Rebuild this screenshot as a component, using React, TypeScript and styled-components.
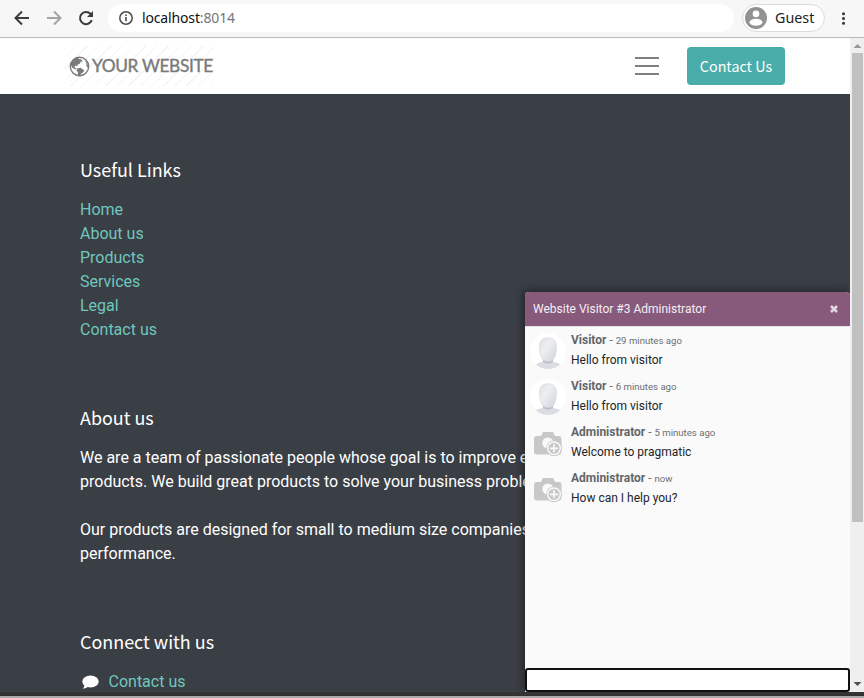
import React from "react";
import styled, { createGlobalStyle } from "styled-components";

const Global = createGlobalStyle`
  * { box-sizing: border-box; }
  html, body { margin: 0; padding: 0; overflow: hidden; }
  ul { list-style: none; margin: 0; padding: 0; }
  h5, p { margin: 0; font-weight: 400; }
  a { color: inherit; text-decoration: none; }
  svg { display: block; flex: none; }
`;

const Window = styled.div`
  position: relative;
  width: 864px;
  height: 698px;
  display: flex;
  flex-direction: column;
  overflow: hidden;
  font-family: Roboto, sans-serif;
`;

const Toolbar = styled.div`
  height: 38px;
  flex: none;
  display: flex;
  align-items: flex-start;
  background: #f7f7f7;
  border-bottom: 1px solid #b9b9b9;
  padding: 4px 0 0 12px;
  font-family: "Noto Sans", sans-serif;
`;

const NavButtons = styled.div`
  display: flex;
  gap: 12px;
  padding-top: 4px;
  width: 96px;
`;

const AddressBar = styled.div`
  width: 626px;
  height: 28px;
  border-radius: 14px;
  background: #fff;
  display: flex;
  align-items: center;
  padding-left: 10px;
  font-size: 14px;
  color: #111;
`;

const Url = styled.span`
  margin-left: 8px;
  padding-bottom: 2px;
  letter-spacing: -0.15px;
  white-space: nowrap;
`;

const Port = styled.span`
  color: #73777b;
`;

const GuestChip = styled.div`
  margin-left: 8px;
  width: 83px;
  height: 28px;
  border: 1px solid #dcdcdc;
  border-radius: 14px;
  background: #fff;
  display: flex;
  align-items: center;
  padding-left: 2px;
  gap: 8px;
  font-size: 14.3px;
  color: #222;
`;

const GuestName = styled.span`
  padding-bottom: 2px;
`;

const MenuDots = styled.svg`
  margin: 8px 0 0 16px;
`;

const Viewport = styled.div`
  height: 654px;
  flex: none;
  display: flex;
`;

const Site = styled.div`
  width: 850px;
  display: flex;
  flex-direction: column;
  background: #3a3e45;
`;

const Header = styled.header`
  height: 56px;
  flex: none;
  display: flex;
  align-items: center;
  background: #fff;
  padding-left: 65px;
`;

const Logo = styled.div`
  width: 150px;
  height: 40px;
  display: flex;
  align-items: center;
  padding-left: 4px;
  gap: 2px;
  color: #7a7a7a;
  background: repeating-linear-gradient(135deg, transparent 0 7.2px, #f4f4f4 7.2px 8.2px);
`;

const LogoText = styled.span`
  font: 400 17.3px/20px Lato, sans-serif;
  -webkit-text-stroke: 0.4px #7a7a7a;
  letter-spacing: -0.35px;
  white-space: nowrap;
`;

const Burger = styled.div`
  margin-left: 420px;
  width: 24px;
  height: 18px;
  display: flex;
  flex-direction: column;
  justify-content: space-between;
`;

const BurgerLine = styled.span`
  height: 2px;
  background: #808080;
`;

const ContactButton = styled.a`
  margin-left: 28px;
  width: 98px;
  height: 38px;
  border-radius: 4px;
  background: #4badaa;
  color: #fff;
  font: 14.3px/38px "Noto Sans CJK SC", sans-serif;
  text-align: center;
  white-space: nowrap;
`;

const Footer = styled.footer`
  flex: 1;
  min-height: 0;
  overflow: hidden;
  display: flex;
  flex-direction: column;
  gap: 63px;
  padding: 63px 0 0 80px;
  font-size: 16px;
  line-height: 24px;
  color: #fff;
`;

const Section = styled.section`
  flex: none;
`;

const Heading = styled.h5`
  font: 17.93px/24px "Noto Sans CJK SC", sans-serif;
  margin-bottom: 17px;
`;

const Paragraph = styled.p`
  width: 490px;
  white-space: pre;
  & + & { margin-top: 24px; }
`;

const SiteLink = styled.li`
  height: 24px;
  display: flex;
  align-items: center;
  gap: 9.5px;
  color: #6fc7be;
`;

const Scrollbar = styled.div`
  width: 14px;
  background: #efefef;
  display: flex;
  flex-direction: column;
  align-items: center;
  justify-content: space-between;
`;

const Thumb = styled.div`
  width: 11px;
  height: 469px;
  margin: 0 0 auto 1px;
  background: #c0c0c0;
`;

const Chat = styled.aside`
  position: absolute;
  left: 525px;
  top: 292px;
  width: 325px;
  height: 400px;
  display: flex;
  flex-direction: column;
  background: #fafafa;
  border-radius: 4px 4px 0 0;
  box-shadow: -1px -1px 8px rgba(0, 0, 0, 0.5);
  clip-path: inset(-12px 0 0 -12px);
  font-size: 12px;
  overflow: hidden;
`;

const ChatHeader = styled.div`
  height: 34px;
  flex: none;
  display: flex;
  align-items: center;
  justify-content: space-between;
  padding: 0 12px 0 8px;
  background: #875a7b;
  color: #f4eff3;
`;

const Messages = styled.div`
  flex: 1;
  border-top: 1px solid #e8e4ec;
  padding: 5px 0 0 5px;
`;

const Message = styled.div`
  height: 46px;
  display: flex;
  gap: 5px;
`;

const AvatarFrame = styled.div`
  width: 36px;
  height: 36px;
  margin-top: 1px;
`;

const MessageText = styled.div`
  color: #212529;
  line-height: 18px;
  white-space: nowrap;
`;

const Meta = styled.div`
  height: 19px;
  line-height: 17px;
  color: #6c6f73;
`;

const Author = styled.strong`
  color: #62666a;
`;

const Time = styled.span`
  font-size: 9.6px;
`;

const Composer = styled.input`
  width: 325px;
  height: 24px;
  border: 2px solid #101010;
  border-radius: 3px;
  background: #fff;
  outline: none;
`;

const BottomEdge = styled.div`
  height: 6px;
  background: linear-gradient(#343434 0 3px, #303030 3px 4px, #aaa 4px 6px);
`;

function Globe() {
  return (
    <svg width="21" height="21" viewBox="0 0 21 21">
      <circle cx="10.5" cy="10.5" r="9.2" fill="#fff" stroke="#7a7a7a" strokeWidth="1.4" />
      <path fill="#7a7a7a" d="M2 7 5 3 9 1.300 10 3l2.500.5 1 2-2 .3-.5 1.700-2.500 1.200-.2 1.800-2-1-1 1.500 2 1.500-.5 1L3.500 12 2 9.500ZM8 12.500l3.500-.8 3.800 2.800-1.300 2-1.700 1-1.500 2.300-1.600-.3-.4-3.500L7.500 14.500ZM15.500 4l2.200 2 1.300 3.500-.2 2.500-1.300-2-.2-3Z" />
    </svg>
  );
}

function Bubble() {
  return (
    <svg width="19" height="18" viewBox="0 0 19 18" fill="#fff">
      <ellipse cx="10.500" cy="8.500" rx="8.200" ry="6" />
      <path d="M4.500 11.500q.2 2.800-2 4.300 4 0 6.300-2.800Z" />
    </svg>
  );
}

function VisitorAvatar() {
  return (
    <svg width="36" height="36" viewBox="0 0 36 36">
      <defs>
        <linearGradient id="head" x1="0" y1="0" x2="1" y2="1">
          <stop offset="0" stopColor="#dfe1e6" />
          <stop offset="0.4" stopColor="#eceef1" />
          <stop offset="1" stopColor="#ced2d9" />
        </linearGradient>
        <clipPath id="disc"><circle cx="18" cy="18" r="18" /></clipPath>
      </defs>
      <g clipPath="url(#disc)">
        <circle cx="18" cy="18" r="18" fill="#fff" />
        <ellipse cx="18" cy="33.500" rx="13.500" ry="5" fill="#dadde2" />
        <path d="M13 24v5q5 3 10 0v-5Z" fill="#b9bfca" />
        <path d="M18 4.800c6 0 8.500 3 8.500 9.200 0 5.500-1 9.500-3 12.300-2.500 3-8.500 3-11 0-2-2.800-3-6.800-3-12.300 0-6.200 2.500-9.200 8.500-9.200Z" fill="url(#head)" stroke="#d3d6dc" strokeWidth=".6" />
      </g>
    </svg>
  );
}

function CameraAvatar() {
  return (
    <svg width="36" height="36" viewBox="0 0 36 36">
      <path d="M4 14q0-3 3-3h4l2-4h10l2 4h3.500q3 0 3 3v12.500q0 3-3 3H7q-3 0-3-3Z" fill="#c8c8c8" />
      <circle cx="17.800" cy="18" r="5.500" fill="#fafafa" />
      <circle cx="24" cy="23.300" r="7.900" fill="#c8c8c8" />
      <circle cx="24" cy="23.300" r="6.300" fill="#c8c8c8" stroke="#fafafa" strokeWidth="1.400" />
      <path d="M20 23.300h8M24 19.300v8" stroke="#fafafa" strokeWidth="1.700" />
    </svg>
  );
}

const links = ["Home", "About us", "Products", "Services", "Legal", "Contact us"];

const messages = [
  { author: "Visitor", time: "29 minutes ago", text: "Hello from visitor" },
  { author: "Visitor", time: "6 minutes ago", text: "Hello from visitor" },
  { author: "Administrator", time: "5 minutes ago", text: "Welcome to pragmatic" },
  { author: "Administrator", time: "now", text: "How can I help you?" },
];

export default function App() {
  return (
    <Window>
      <Global />
      <Toolbar>
        <NavButtons>
          <svg width="20" height="20" viewBox="0 0 20 20" fill="none" stroke="#3c3c3c" strokeWidth="2">
            <path d="M17 10H4M10 3.500 3.500 10l6.500 6.500" />
          </svg>
          <svg width="20" height="20" viewBox="0 0 20 20" fill="none" stroke="#a5a5a5" strokeWidth="2">
            <path d="M3 10h13M10 3.500l6.500 6.500-6.500 6.500" />
          </svg>
          <svg width="20" height="20" viewBox="0 0 20 20" fill="none" stroke="#3c3c3c" strokeWidth="2">
            <path d="M15.800 12.200A6.100 6.100 0 1 1 14.500 5.800L16 7.500" />
            <path d="M17 3v6h-6Z" fill="#3c3c3c" stroke="none" />
          </svg>
        </NavButtons>
        <AddressBar>
          <svg width="16" height="16" viewBox="0 0 16 16">
            <circle cx="8" cy="8" r="6.200" fill="none" stroke="#4a4a4a" strokeWidth="1.500" />
            <path d="M8 7v4.300M8 4.500v1.600" stroke="#4a4a4a" strokeWidth="1.600" />
          </svg>
          <Url>localhost<Port>:8014</Port></Url>
        </AddressBar>
        <GuestChip>
          <svg width="22" height="22" viewBox="0 0 22 22">
            <circle cx="11" cy="11" r="11" fill="#929292" />
            <circle cx="11" cy="6.800" r="3.400" fill="#fff" />
            <ellipse cx="11" cy="15.300" rx="6.500" ry="3.500" fill="#fff" />
          </svg>
          <GuestName>Guest</GuestName>
        </GuestChip>
        <MenuDots width="6" height="14" viewBox="0 0 6 14" fill="#333">
          <circle cx="2.500" cy="1.800" r="1.500" />
          <circle cx="2.500" cy="6.500" r="1.500" />
          <circle cx="2.500" cy="11.300" r="1.500" />
        </MenuDots>
      </Toolbar>
      <Viewport>
        <Site>
          <Header>
            <Logo>
              <Globe />
              <LogoText>YOUR WEBSITE</LogoText>
            </Logo>
            <Burger><BurgerLine /><BurgerLine /><BurgerLine /></Burger>
            <ContactButton href="#">Contact Us</ContactButton>
          </Header>
          <Footer>
            <Section>
              <Heading>Useful Links</Heading>
              <ul>{links.map((l) => <SiteLink key={l}><a href="#">{l}</a></SiteLink>)}</ul>
            </Section>
            <Section>
              <Heading>About us</Heading>
              <Paragraph>{"We are a team of passionate people whose goal is to improve every\nproducts. We build great products to solve your business problem"}</Paragraph>
              <Paragraph>{"Our products are designed for small to medium size companies\nperformance."}</Paragraph>
            </Section>
            <Section>
              <Heading>Connect with us</Heading>
              <ul><SiteLink><Bubble /><a href="#">Contact us</a></SiteLink></ul>
            </Section>
          </Footer>
        </Site>
        <Scrollbar>
          <svg width="14" height="15" viewBox="0 0 14 15"><path d="M3.500 10 7.500 6l4 4Z" fill="#999" /></svg>
          <Thumb />
          <svg width="14" height="15" viewBox="0 0 14 15"><path d="M3.500 5h8l-4 4Z" fill="#505050" /></svg>
        </Scrollbar>
      </Viewport>
      <BottomEdge />
      <Chat>
        <ChatHeader>
          <span>Website Visitor #3 Administrator</span>
          <svg width="8" height="8" viewBox="0 0 8 8"><path d="M1 1l6 6M7 1 1 7" stroke="#e3d7e0" strokeWidth="2.600" /></svg>
        </ChatHeader>
        <Messages>
          {messages.map((m, i) => (
            <Message key={i}>
              <AvatarFrame>{m.author === "Visitor" ? <VisitorAvatar /> : <CameraAvatar />}</AvatarFrame>
              <MessageText>
                <Meta><Author>{m.author}</Author> - <Time>{m.time}</Time></Meta>
                {m.text}
              </MessageText>
            </Message>
          ))}
        </Messages>
        <Composer />
      </Chat>
    </Window>
  );
}
